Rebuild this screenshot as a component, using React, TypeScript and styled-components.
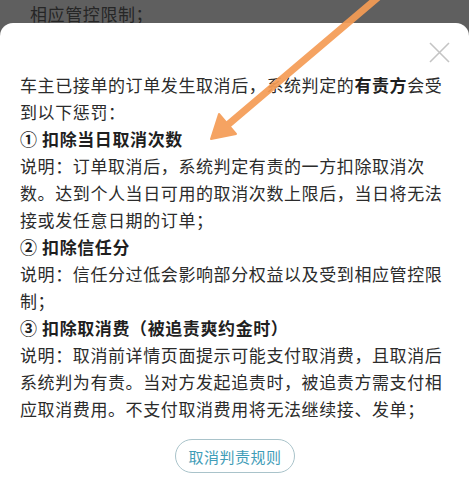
import styled, { createGlobalStyle } from "styled-components";

const GlobalStyle = createGlobalStyle`
  html, body {
    margin: 0;
    padding: 0;
    background: #ffffff;
  }
  body {
    font-family: "Noto Sans CJK SC", "Noto Sans", sans-serif;
  }
`;

const Page = styled.div`
  position: relative;
  width: 469px;
  height: 487px;
  overflow: hidden;
  background: #5f5f5f;
  display: flex;
  flex-direction: column;
`;

const Backdrop = styled.div`
  height: 23px;
  flex-shrink: 0;
  overflow: hidden;
  padding-left: 30px;
  font-size: 17px;
  line-height: 27px;
  letter-spacing: 0.6px;
  color: #262626;
`;

const Sheet = styled.div`
  flex: 1;
  background: #ffffff;
  border-radius: 13px 13px 0 0;
  padding: 0 19px 0 20px;
  display: flex;
  flex-direction: column;
`;

const Header = styled.div`
  height: 48px;
  display: flex;
  justify-content: flex-end;
  align-items: flex-start;
  padding-top: 19px;
  box-sizing: border-box;
`;

const CloseButton = styled.button`
  width: 21px;
  height: 21px;
  padding: 0;
  border: none;
  background: none;
  cursor: pointer;
  display: block;
`;

const Body = styled.div`
  font-size: 17px;
  line-height: 27px;
  letter-spacing: 0.6px;
  color: #2b2b2b;
`;

const Paragraph = styled.p`
  margin: 0;
`;

const Heading = styled.p`
  margin: 0;
  font-weight: 700;
  color: #1f1f1f;
`;

const Strong = styled.strong`
  font-weight: 700;
  color: #1f1f1f;
`;

const Footer = styled.div`
  display: flex;
  justify-content: center;
  padding-top: 17px;
`;

const RuleButton = styled.button`
  width: 120px;
  height: 34px;
  border: 1px solid #a9c3ca;
  border-radius: 17px;
  background: #ffffff;
  color: #3f9db8;
  font-family: "Noto Sans CJK SC", "Noto Sans", sans-serif;
  font-size: 15px;
  letter-spacing: 0.5px;
  cursor: pointer;
`;

const Annotation = styled.svg`
  position: absolute;
  left: 0;
  top: 0;
  width: 469px;
  height: 487px;
  pointer-events: none;
`;

const sections = [
  {
    title: "① 扣除当日取消次数",
    text: "说明：订单取消后，系统判定有责的一方扣除取消次数。达到个人当日可用的取消次数上限后，当日将无法接或发任意日期的订单；",
  },
  {
    title: "② 扣除信任分",
    text: "说明：信任分过低会影响部分权益以及受到相应管控限制；",
  },
  {
    title: "③ 扣除取消费（被追责爽约金时）",
    text: "说明：取消前详情页面提示可能支付取消费，且取消后系统判为有责。当对方发起追责时，被追责方需支付相应取消费用。不支付取消费用将无法继续接、发单；",
  },
];

export default function App() {
  return (
    <>
      <GlobalStyle />
      <Page>
        <Backdrop>相应管控限制；</Backdrop>
        <Sheet>
          <Header>
            <CloseButton aria-label="关闭">
              <svg width="21" height="21" viewBox="0 0 21 21">
                <path
                  d="M1 1 L20 20 M20 1 L1 20"
                  stroke="#c4c4c4"
                  strokeWidth="1.6"
                  fill="none"
                />
              </svg>
            </CloseButton>
          </Header>
          <Body>
            <Paragraph>
              车主已接单的订单发生取消后，系统判定的<Strong>有责方</Strong>会受到以下惩罚：
            </Paragraph>
            {sections.map((s) => (
              <div key={s.title}>
                <Heading>{s.title}</Heading>
                <Paragraph>{s.text}</Paragraph>
              </div>
            ))}
          </Body>
          <Footer>
            <RuleButton>取消判责规则</RuleButton>
          </Footer>
        </Sheet>
        <Annotation viewBox="0 0 469 487">
          <g fill="#f59c55" stroke="#f59c55" opacity="0.92">
            <line x1="382" y1="-6" x2="224" y2="128" strokeWidth="7" strokeLinecap="round" />
            <polygon points="211,139 236,134 219,114" strokeWidth="2" strokeLinejoin="round" />
          </g>
        </Annotation>
      </Page>
    </>
  );
}
